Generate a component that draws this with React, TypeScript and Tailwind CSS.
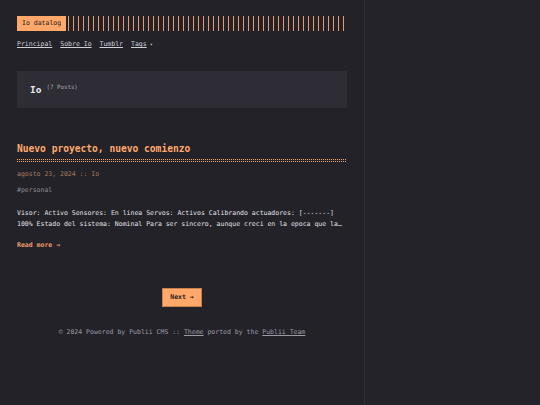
import React from "react";

const mono = { fontFamily: '"DejaVu Sans Mono", "Liberation Mono", monospace' };

export default function App() {
  return (
    <div className="w-[540px] h-[405px] bg-[#232229] flex overflow-hidden" style={mono}>
      <div className="w-[365px] h-full border-r border-[#302f36] shrink-0 flex flex-col pl-[17px] pr-[17px]">
        {/* header */}
        <div className="mt-[16px] flex h-[15px] items-stretch w-[330px]">
          <div className="bg-[#ffa86a] text-[#222] text-[6.5px] leading-[15px] px-[5px] shrink-0">Io datalog</div>
          <div className="flex-1 ml-[2px] bg-[repeating-linear-gradient(90deg,#e69c6a_0_1px,transparent_1px_5px)]"></div>
        </div>
        <nav className="mt-[9px] flex gap-[8px] text-[6.5px] leading-[9px] text-[#cfcfd6]">
          <span className="underline underline-offset-1">Principal</span>
          <span className="underline underline-offset-1">Sobre Io</span>
          <span className="underline underline-offset-1">Tumblr</span>
          <span className="flex items-center gap-[3px]"><span className="underline underline-offset-1">Tags</span><span className="text-[5px]">▾</span></span>
        </nav>
        {/* box */}
        <div className="mt-[22px] h-[37px] w-[330px] bg-[#2e2d35] flex items-center pl-[13px] pt-[1px]">
          <span className="text-[9.5px] font-bold text-[#ececf0]">Io</span>
          <span className="ml-[5px] -mt-[5px] text-[5.8px] text-[#a9a8b0]">(7 Posts)</span>
        </div>
        {/* post */}
        <h1 className="mt-[34px] text-[9.6px] leading-[14px] font-bold text-[#ffa86a]">Nuevo proyecto, nuevo comienzo</h1>
        <div className="mt-[3px] w-[330px] flex flex-col gap-[1px]">
          <div className="h-px bg-[repeating-linear-gradient(90deg,#ffa86a_0_1px,transparent_1px_2px)]"></div>
          <div className="h-px bg-[repeating-linear-gradient(90deg,#ffa86a_0_1px,transparent_1px_2px)]"></div>
        </div>
        <div className="mt-[7px] text-[6.5px] leading-[10px] text-[#a37a5e]">agosto 23, 2024 :: Io</div>
        <div className="mt-[6px] text-[6.5px] leading-[10px] text-[#8b8a92]">#personal</div>
        <p className="mt-[13px] text-[6.5px] leading-[11px] text-[#e2e1e6] w-[330px]">
          Visor: Activo Sensores: En linea Servos: Activos Calibrando actuadores: [-------]
          <br />
          100% Estado del sistema: Nominal Para ser sincero, aunque creci en la epoca que la…
        </p>
        <div className="mt-[10px] text-[6.5px] leading-[10px] font-bold text-[#e99a68]">Read more →</div>
        {/* pagination */}
        <div className="mt-[38px] flex justify-center w-[330px]">
          <div className="w-[40px] h-[19px] bg-[#ffa86a] border border-[#c77f4c] flex items-center justify-center text-[6.5px] font-bold text-[#2a2020]">Next →</div>
        </div>
        <footer className="mt-[20px] w-[330px] text-center text-[6.5px] leading-[10px] text-[#9c9ba3]">
          © 2024 Powered by Publii CMS :: <span className="underline">Theme</span> ported by the <span className="underline">Publii Team</span>
        </footer>
      </div>
      <div className="flex-1 h-full bg-[#242329]"></div>
    </div>
  );
}
